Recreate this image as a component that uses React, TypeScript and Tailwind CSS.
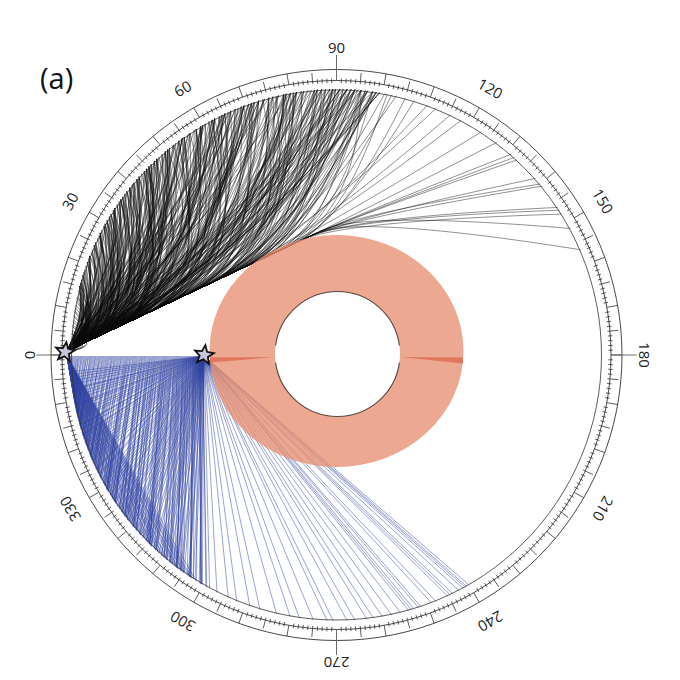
import React from 'react';

type P = [number, number];
const CX = 336.5;
const CY = 355;
const rad = (d: number) => (d * Math.PI) / 180;
const pt = (th: number, r: number): P => [CX - r * Math.cos(rad(th)), CY - r * Math.sin(rad(th))];
const f = (p: P) => `${p[0].toFixed(2)},${p[1].toFixed(2)}`;

function rng(seed: number) {
  let s = seed;
  return () => {
    s = (s * 1664525 + 1013904223) % 4294967296;
    return s / 4294967296;
  };
}

const R_END = 266;
const O: P = [67, 351];
const S: P = [204, 356];
const O2: P = [67, 356];
const PHI = 25.3;
const DIR: P = [Math.cos(rad(PHI)), -Math.sin(rad(PHI))];
const along = (L: number): P => [O[0] + DIR[0] * L, O[1] + DIR[1] * L];
const lerp = (a: P, b: P, t: number): P => [a[0] + (b[0] - a[0]) * t, a[1] + (b[1] - a[1]) * t];

function curveTo(T: P, g: number, tf: number, k2: number): string {
  const dx = T[0] - O[0];
  const dy = O[1] - T[1];
  const phiS = (Math.atan2(dy, dx) * 180) / Math.PI;
  const phi1 = PHI + 0.4 + (phiS - PHI - 0.4) * g;
  const len = Math.hypot(dx, dy) * tf;
  const C1: P = [O[0] + Math.cos(rad(phi1)) * len, O[1] - Math.sin(rad(phi1)) * len];
  const C2 = lerp(T, C1, k2);
  return `M${f(O)}C${f(C1)} ${f(C2)} ${f(T)}`;
}

function peel(T: P, Ld: number, k1: number, k2: number): string {
  const Pd = along(Ld);
  const dist = Math.hypot(T[0] - Pd[0], T[1] - Pd[1]);
  const C1 = along(Ld + dist * k1);
  const C2 = lerp(T, C1, k2);
  return `M${f(O)}L${f(Pd)}C${f(C1)} ${f(C2)} ${f(T)}`;
}

function buildBlack(): string[] {
  const r = rng(11);
  const out: string[] = [];
  for (let i = 0; i < 24; i++) {
    const th = 3 + i * 0.55 + r() * 0.5;
    const T = pt(th, R_END);
    const Q = pt(th * 0.5, 242 - r() * 12);
    out.push(`M${f(O)}Q${f(Q)} ${f(T)}`);
  }
  const K = 110;
  for (let k = 0; k < K; k++) {
    const th = 15 + (k * 85) / K + (r() - 0.5) * 0.4;
    const T = pt(th, R_END);
    const gmin = Math.max(0, 0.6 - ((th - 15) / 45) * 0.6);
    const m = 2 + Math.floor(r() * 5);
    const lmax = 250 * Math.pow(Math.min(1, Math.max(0, (th - 18) / 80)), 1.2);
    for (let j = 0; j < m; j++) {
      if (r() < 0.35) {
        const g = gmin + (0.85 - gmin) * Math.pow(r(), 1.5);
        out.push(curveTo(T, g, 0.45 + r() * 0.3, 0.35 + r() * 0.2));
      } else {
        const Ld = lmax * Math.pow(r(), 0.8);
        out.push(peel(T, Ld, 0.25 + r() * 0.2, 0.3 + r() * 0.2));
      }
    }
  }
  const mid = [100.5, 101, 102, 103, 105, 107, 110, 112, 115.4, 118, 123, 127];
  for (const th of mid) {
    const T = pt(th, R_END);
    out.push(peel(T, 150 + r() * 110, 0.3, 0.35));
  }
  const high = [131, 132, 132.8, 138.4, 140, 140.6, 146.3, 147, 148, 151.6, 156.7];
  for (const th of high) {
    const T = pt(th, R_END);
    const Lp = 255 + r() * 30;
    const P1 = along(Lp);
    const C2 = along(Lp + 45);
    out.push(`M${f(O)}L${f(P1)}Q${f(C2)} ${f(T)}`);
  }
  return out;
}

function buildBlue(): string[] {
  const r = rng(29);
  const out: string[] = [];
  const NA = 80;
  for (let i = 0; i < NA; i++) {
    const th = 302 + (55 * i) / NA + (r() - 0.5) * 0.6;
    out.push(`M${f(O2)}L${f(pt(th, R_END))}`);
  }
  const NB = 85;
  for (let i = 0; i < NB; i++) {
    const th = 300 + (57 * i) / NB + (r() - 0.5) * 0.6;
    out.push(`M${f(S)}L${f(pt(th, R_END))}`);
  }
  const NC = 150;
  for (let i = 0; i < NC; i++) {
    const u = i / NC;
    const src: P = [O2[0] + 137 * u, O2[1]];
    const th = 357 - 57 * Math.pow(u, 0.9) + (r() - 0.5) * 3;
    out.push(`M${f(src)}L${f(pt(Math.min(th, 358), R_END))}`);
  }
  const sparse = [
    240, 240.6, 241, 241.5, 242.5, 244, 244.6, 245.2, 248, 249, 251.4, 252, 253, 253.6, 254.2, 256, 258, 260, 262, 263.4, 266, 267.7,
    270.7, 272, 275, 278, 280, 283, 286.7, 289, 292, 294, 296.7, 298.5,
  ];
  for (const th of sparse) out.push(`M${f(S)}L${f(pt(th, R_END))}`);
  return out;
}

function star(cx: number, cy: number, R: number, r: number, rot: number) {
  const pts: string[] = [];
  for (let k = 0; k < 10; k++) {
    const a = rad(-90 + rot + k * 36);
    const rr = k % 2 === 0 ? R : r;
    pts.push(`${(cx + rr * Math.cos(a)).toFixed(2)},${(cy + rr * Math.sin(a)).toFixed(2)}`);
  }
  return pts.join(' ');
}

export default function App() {
  const ticks: string[] = [];
  for (let d = 0; d < 360; d++) {
    let r1: number, r2: number;
    if (d % 10 === 0) {
      r1 = 274.5;
      r2 = 285.5;
    } else if (d % 5 === 0) {
      r1 = 272;
      r2 = 283;
    } else {
      r1 = 272;
      r2 = 276.5;
    }
    ticks.push(`M${f(pt(d, r1))}L${f(pt(d, r2))}`);
  }
  const cardinal: string[] = [0, 90, 180, 270].map((d) => `M${f(pt(d, 274.5))}L${f(pt(d, 300))}`);
  const labels = [0, 30, 60, 90, 120, 150, 180, 210, 240, 270, 300, 330];
  const black = buildBlack();
  const blue = buildBlue();

  const hx = 337.5;
  const hy = 354;
  const hr = 62.5;
  const ringPath =
    `M${336.5 - 127} 351a127 116 0 1 0 254 0a127 116 0 1 0 -254 0Z` +
    `M${hx - hr} ${hy}a${hr} ${hr} 0 1 0 ${2 * hr} 0a${hr} ${hr} 0 1 0 ${-2 * hr} 0Z`;
  const hp = (a: number): P => [hx + hr * Math.cos(rad(a)), hy - hr * Math.sin(rad(a))];
  const holeTop = `M${f(hp(172))}A${hr} ${hr} 0 0 1 ${f(hp(8))}`;
  const holeBot = `M${f(hp(188))}A${hr} ${hr} 0 0 0 ${f(hp(352))}`;

  return (
    <div className="w-[680px] h-[680px] bg-white overflow-hidden">
      <svg width={680} height={680} viewBox="0 0 680 680" className="block">
        <rect x={0} y={0} width={680} height={680} fill="#ffffff" />
        <text x={40} y={88.5} fontFamily="'Open Sans', 'Liberation Sans', sans-serif" fontSize={29} fill="#111">
          (a)
        </text>

        <g fill="none" stroke="#0a0a0a" strokeWidth={0.55} strokeOpacity={0.82} strokeLinejoin="round">
          {black.map((d, i) => (
            <path key={i} d={d} />
          ))}
        </g>
        <g fill="none" stroke="#2f42a0" strokeWidth={0.6} strokeOpacity={0.82}>
          {blue.map((d, i) => (
            <path key={i} d={d} />
          ))}
        </g>

        <path d={ringPath} fill="#e79276" fillOpacity={0.8} fillRule="evenodd" />
        <polygon points="210,357.2 210,362.5 274,357.2" fill="#dd6e52" fillOpacity={0.85} />
        <polygon points="401,357 463,357.5 463,363.5" fill="#dd6e52" fillOpacity={0.85} />
        <path d={holeTop} fill="none" stroke="#3c302c" strokeWidth={1.1} strokeOpacity={0.85} />
        <path d={holeBot} fill="none" stroke="#3c302c" strokeWidth={1.1} strokeOpacity={0.85} />

        <g fill="none" stroke="#333" strokeWidth={0.9}>
          <circle cx={CX} cy={CY} r={285.5} />
          <circle cx={CX} cy={CY} r={274.5} />
          <circle cx={CX} cy={CY} r={265} strokeWidth={0.8} />
          <path d={ticks.join('')} strokeWidth={0.8} />
        </g>
        <path d={cardinal.join('')} stroke="#6a6a6a" strokeWidth={1} fill="none" />

        {labels.map((th) => {
          const [x, y] = pt(th, 308);
          return (
            <text
              key={th}
              x={x}
              y={y}
              transform={`rotate(${th - 90} ${x.toFixed(2)} ${y.toFixed(2)})`}
              textAnchor="middle"
              dominantBaseline="central"
              fontFamily="'Open Sans', 'DejaVu Sans', sans-serif"
              fontSize={15}
              fill="#222"
            >
              {th}
            </text>
          );
        })}

        <polygon points={star(65, 352, 10, 4.4, 8)} fill="#c6c6da" stroke="#111" strokeWidth={1.8} strokeLinejoin="miter" />
        <polygon points={star(204, 355, 10, 4.4, 8)} fill="#c6c6da" stroke="#111" strokeWidth={1.8} strokeLinejoin="miter" />
      </svg>
    </div>
  );
}
